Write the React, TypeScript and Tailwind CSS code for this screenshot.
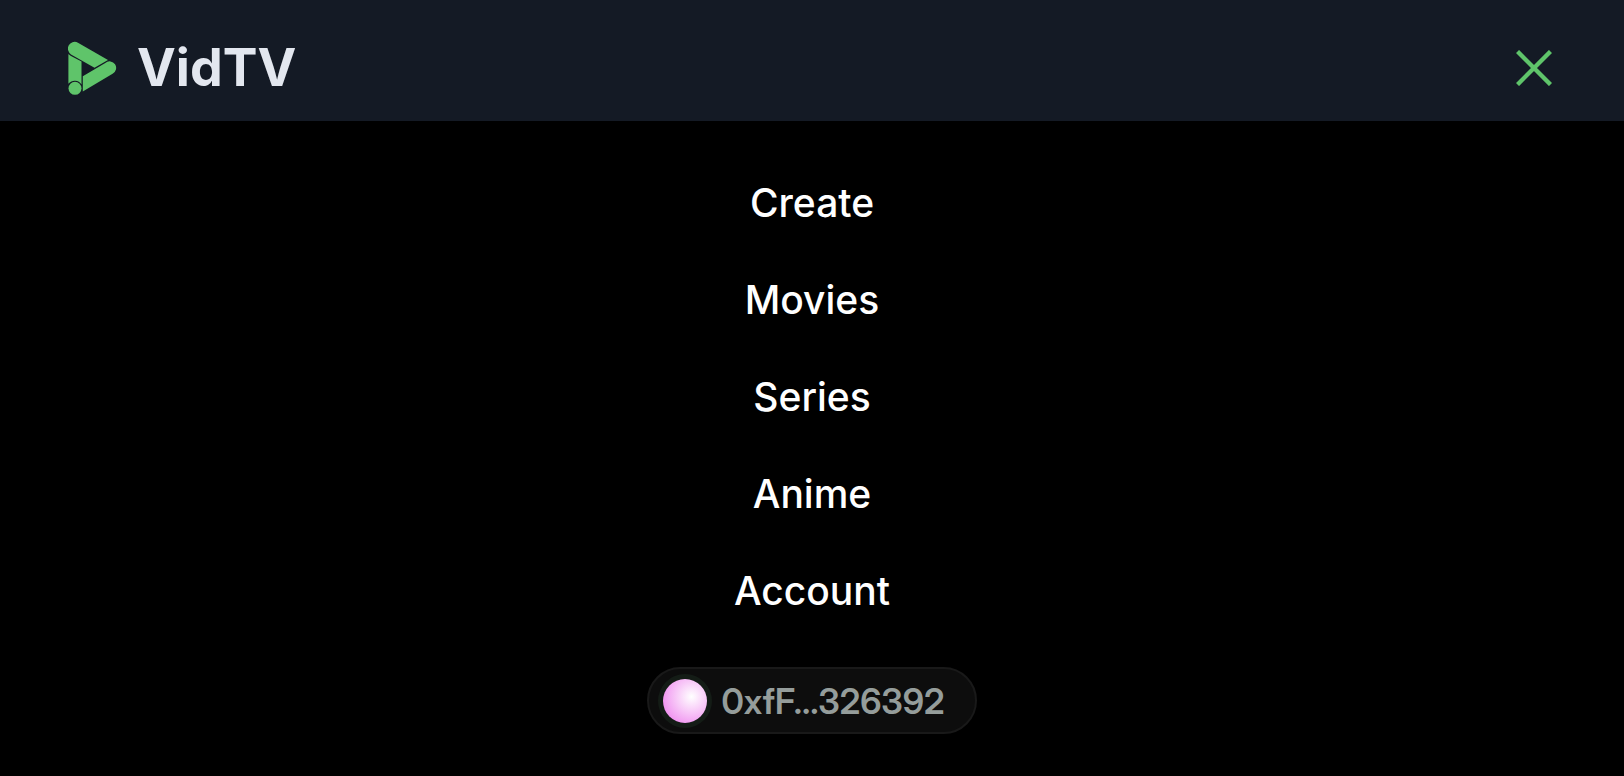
import React, { useState } from "react";

const links = ["Create", "Movies", "Series", "Anime", "Account"];

const Logo: React.FC = () => (
  <svg viewBox="0 -2 49 55" className="w-[49px] h-[55px]" fill="#5fc46a" aria-hidden="true">
    <path d="M10.4 1 A6.7 6.7 0 0 0 0.7 9.5 Q1 11.2 3 12.4 L26.5 25.8 L40 17.9 Z" />
    <path d="M0.4 12 Q1.4 13 3 13.9 L13.5 19.6 V42.6 A7.9 7.9 0 0 0 0.4 41.8 Z" />
    <path d="M14.8 34.2 L37.3 20.9 A6.6 6.6 0 1 1 44.6 31.8 L14.8 49.4 Z" />
    <circle cx="7" cy="46.3" r="6.5" />
  </svg>
);

const App: React.FC = () => {
  const [isOpen, setIsOpen] = useState(true);

  return (
    <div className="min-h-screen bg-black font-['Inter',sans-serif]">
      <header className="flex items-center justify-between bg-[#141a25] px-[68px] pt-[35px] pb-[21px]">
        <a href="#" className="flex items-center gap-5">
          <Logo />
          <span className="text-[52px] leading-[65px] font-bold text-[#e3e7ef]">VidTV</span>
        </a>
        <button
          type="button"
          aria-label="Toggle menu"
          onClick={() => setIsOpen(!isOpen)}
          className="mr-1 text-[#5fc46a]"
        >
          <svg viewBox="0 0 36 36" className="size-9" fill="none" stroke="currentColor" strokeWidth="4.4">
            <path d="M1.5 1.5 L34.5 34.5 M34.5 1.5 L1.5 34.5" />
          </svg>
        </button>
      </header>
      {isOpen && (
        <nav className="flex flex-col items-center pt-[53px] pb-10">
          <ul className="flex flex-col items-center gap-10 text-[39px] leading-[57px] font-medium text-white">
            {links.map(link => (
              <li key={link}>
                <a href="#">{link}</a>
              </li>
            ))}
          </ul>
          <button
            type="button"
            className="mt-12 flex h-[67px] items-center gap-[14px] rounded-full border-2 border-[#191919] bg-[#0d0d0d] pl-[14px] pr-[30px]"
          >
            <span className="size-11 rounded-full bg-[radial-gradient(circle_at_65%_40%,white,#ee82ee_90%)] ring-5 ring-[#141c16]" />
            <span className="font-['Inter_Display','Inter',sans-serif] text-[35px] leading-10 font-semibold text-[#959d9b]">
              0xfF...326392
            </span>
          </button>
        </nav>
      )}
    </div>
  );
};

export default App;
